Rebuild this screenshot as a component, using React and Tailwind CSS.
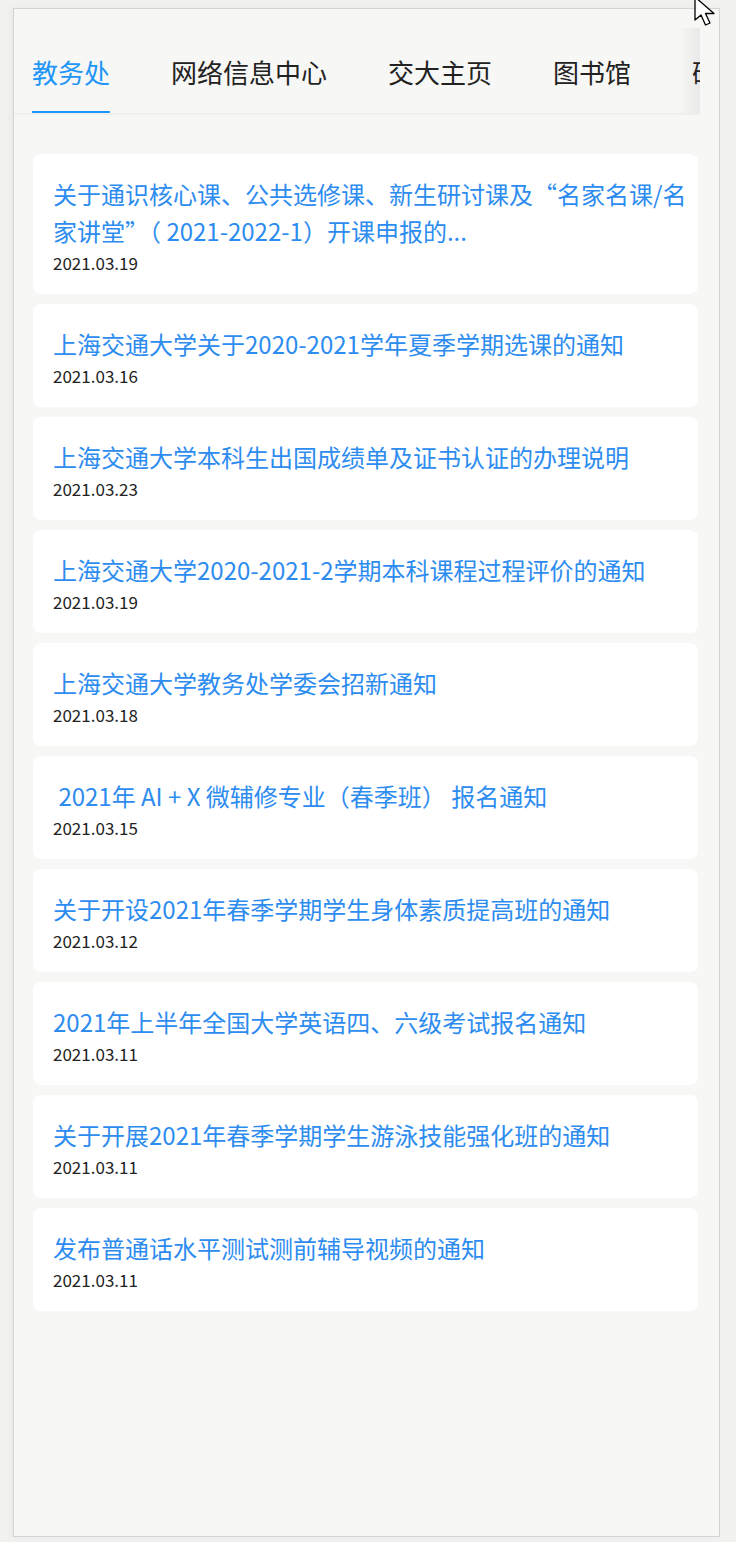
import React from 'react';

const tabs = ['教务处', '网络信息中心', '交大主页', '图书馆', '研究生院'];

const notices = [
  { title: '关于通识核心课、公共选修课、新生研讨课及“名家名课/名家讲堂”（ 2021-2022-1）开课申报的...', date: '2021.03.19' },
  { title: '上海交通大学关于2020-2021学年夏季学期选课的通知', date: '2021.03.16' },
  { title: '上海交通大学本科生出国成绩单及证书认证的办理说明', date: '2021.03.23' },
  { title: '上海交通大学2020-2021-2学期本科课程过程评价的通知', date: '2021.03.19' },
  { title: '上海交通大学教务处学委会招新通知', date: '2021.03.18' },
  { title: '\u00a02021年 AI + X 微辅修专业（春季班） 报名通知', date: '2021.03.15' },
  { title: '关于开设2021年春季学期学生身体素质提高班的通知', date: '2021.03.12' },
  { title: '2021年上半年全国大学英语四、六级考试报名通知', date: '2021.03.11' },
  { title: '关于开展2021年春季学期学生游泳技能强化班的通知', date: '2021.03.11' },
  { title: '发布普通话水平测试测前辅导视频的通知', date: '2021.03.11' },
];

function Cursor() {
  return (
    <svg className="absolute left-[692px] top-[-4px]" width="30" height="34" viewBox="0 0 30 34">
      <path d="M3 1 L3 24 L9 19 L13.5 29 L18 27 L13.5 17.5 L22 17.5 Z" fill="#fff" stroke="#000" strokeWidth="1.3" strokeLinejoin="round" />
    </svg>
  );
}

export default function App() {
  return (
    <div
      className="relative w-[736px] h-[1542px] bg-[#f1f1f0] pt-[8px] pl-[13px] pr-[16px] pb-[5px]"
      style={{ fontFamily: '"Microsoft YaHei", "Noto Sans CJK SC", "Noto Sans", sans-serif' }}
    >
      <div className="h-full bg-[#f7f7f5] border border-[#d4d4d4] shadow-[-3px_0_6px_rgba(0,0,0,0.03)] pt-[19px] pr-[19px]">
        {/* tab bar */}
        <div className="relative h-[87px] overflow-hidden border-b-2 border-[#efefef]">
          <div className="absolute right-0 top-0 bottom-0 w-[22px] bg-gradient-to-r from-transparent to-[#e9e9e9]" />
          <div className="relative flex items-center h-full pl-[18px] gap-[61px] whitespace-nowrap">
            {tabs.map((t, i) => (
              <div key={t} className="relative h-full flex items-center pt-[2px]">
                <span className={`text-[26px] leading-none ${i === 0 ? 'text-[#2196f8]' : 'text-[#222]'}`}>{t}</span>
                {i === 0 && <div className="absolute left-0 right-0 bottom-[-2px] h-[4px] bg-[#2196f8]" />}
              </div>
            ))}
          </div>
        </div>

        {/* notice list */}
        <div className="flex flex-col gap-[10px] pt-[39px] pl-[19px] pr-[2px]">
          {notices.map((n, i) => (
            <div key={i} className="bg-white rounded-[8px] pl-[20px] pr-[8px] pt-[21px] pb-[19px]">
              <div className="text-[24px] leading-[37px] text-[#2d8cf0]">{n.title}</div>
              <div className="mt-[2px] text-[17px] leading-[24px] text-[#222]">{n.date}</div>
            </div>
          ))}
        </div>
      </div>
      <Cursor />
    </div>
  );
}
